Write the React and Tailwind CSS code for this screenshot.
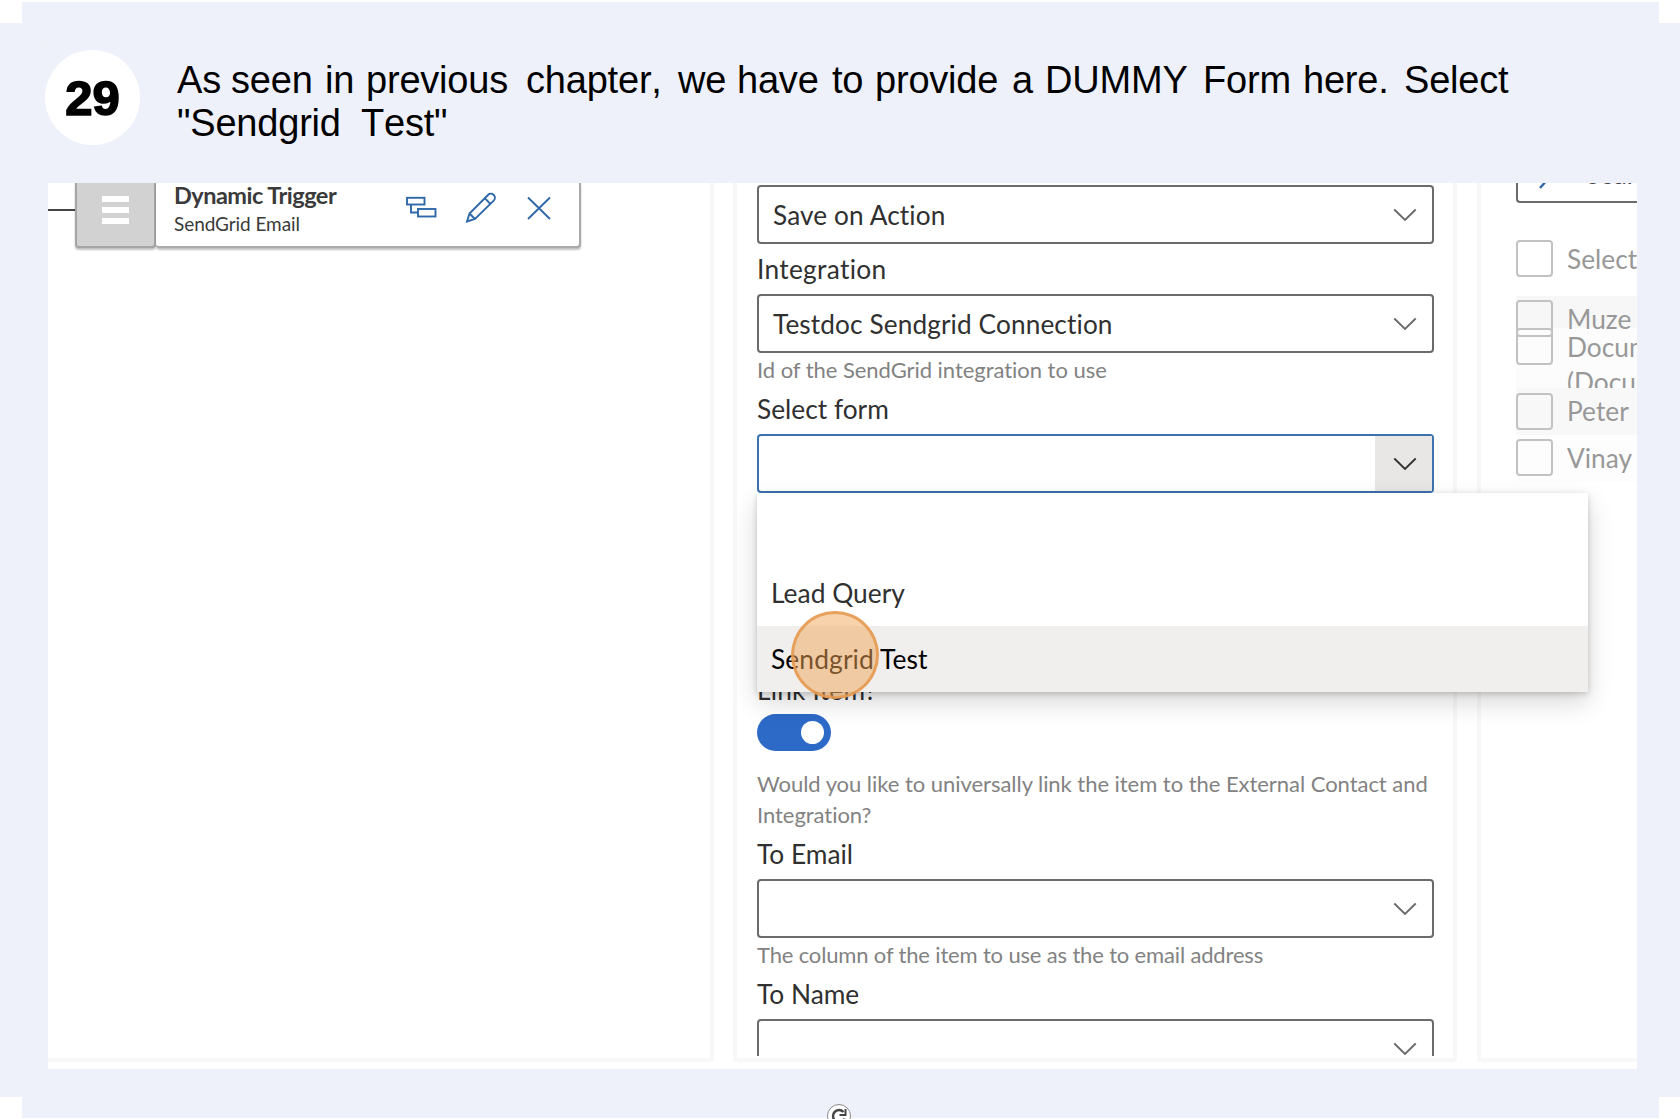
import React from "react";

const LATO = "font-[Lato,sans-serif] [font-variant-ligatures:none]";

const TITLE = [
  [
    ["As", "w-[54px]"],
    ["seen", "w-[94px]"],
    ["in", "w-[41px]"],
    ["previous", "w-[160px]"],
    ["chapter,", "w-[152px]"],
    ["we", "w-[59px]"],
    ["have", "w-[95px]"],
    ["to", "w-[43px]"],
    ["provide", "w-[137px]"],
    ["a", "w-[33px]"],
    ["DUMMY", "w-[158px]"],
    ["Form", "w-[100px]"],
    ["here.", "w-[101px]"],
    ["Select", "w-[120px]"],
  ],
  [
    ['"Sendgrid', "w-[184px]"],
    ['Test"', "w-[120px]"],
  ],
];

function Chevron({ color = "#6a6a6a" }) {
  return (
    <svg width="24" height="14" viewBox="0 0 24 14" fill="none">
      <path d="M1.3 1.5 L12 12 L22.7 1.5" stroke={color} strokeWidth="1.9" />
    </svg>
  );
}

function Field({ children }) {
  return (
    <div className="flex h-[59px] w-[677px] shrink-0 items-center justify-between rounded-[4px] border-2 border-[#6b6b6b] bg-white pl-[14px] pr-[15px]">
      <span className="text-[26.2px] leading-[50px] tracking-[0.12px] text-[#303030]">{children}</span>
      <Chevron />
    </div>
  );
}

function Label({ children, className = "" }) {
  return (
    <div className={"h-[50px] shrink-0 text-[26.3px] leading-[50px] text-[#303030] " + className}>{children}</div>
  );
}

function Hint({ children }) {
  return (
    <div className="mt-px -mb-px shrink-0 text-[22px] leading-[31px] tracking-[-0.04px] whitespace-nowrap text-[#828282]">
      {children}
    </div>
  );
}

function Check() {
  return <span className="h-[37px] w-[37px] shrink-0 rounded-[4px] border-2 border-[#c2c2c2]" />;
}

function Person({ className, children }) {
  return (
    <div className={"flex shrink-0 gap-[14px] text-[26.3px] whitespace-nowrap text-[#989898] " + className}>
      <Check />
      {children}
    </div>
  );
}

function Workflow() {
  return (
    <section className="h-[879px] w-[666px] shrink-0 border-r-4 border-b-4 border-[#f8f8f8]">
      <div className="flex h-[65px] items-start">
        <div className="mt-[26px] h-[2px] w-[27px] bg-[#444]" />
        <div className="flex h-[65px] w-[81px] flex-col items-center gap-[5px] rounded-b-[4px] border-x-2 border-b-2 border-[#a5a5a5] bg-[#d2d2d2] pt-[13px] shadow-[0_2px_2px_rgba(0,0,0,0.25)]">
          <span className="h-[6px] w-[27px] bg-white" />
          <span className="h-[6px] w-[27px] bg-white" />
          <span className="h-[6px] w-[27px] bg-white" />
        </div>
        <div className="flex h-[65px] w-[425px] rounded-b-[4px] border-r-2 border-b-2 border-[#aaa] bg-white pl-[18px] shadow-[0_2px_2px_rgba(0,0,0,0.25)]">
          <div className="w-[232px] shrink-0 text-[#3a3a3a]">
            <div className="h-[28px] text-[23.5px] leading-[24px] font-bold tracking-[-0.5px]">Dynamic Trigger</div>
            <div className="text-[19px] leading-[26px] tracking-[-0.07px]">SendGrid Email</div>
          </div>
          <svg width="150" height="40" viewBox="407 186 150 40" fill="none" stroke="#2f68a8" strokeWidth="1.9" className="mt-[2px]">
            <rect x="408" y="198.8" width="17.5" height="6.7" />
            <rect x="419" y="210" width="17.5" height="7.5" />
            <path d="M412 205.5 V213.5 H419" />
            <path d="M468 222.5 L470.5 214.5 L489 196 A4 4 0 0 1 494.7 201.7 L476 220 Z M470.5 214.5 L476 220 M485.7 199.2 L491.5 205" />
            <path d="M529 198.5 L551 220 M551 198.5 L529 220" />
          </svg>
        </div>
      </div>
    </section>
  );
}

function Dropdown() {
  return (
    <div className="absolute top-[59px] left-0 z-10 h-[199px] w-[831px] bg-white text-[26.4px] shadow-[0_10px_24px_rgba(0,0,0,0.16),0_2px_6px_rgba(0,0,0,0.18)]">
      <div className="h-[66px]" />
      <div className="h-[67px] pl-[14px] leading-[68px] text-[#303030]">Lead Query</div>
      <div className="h-[66px] bg-[#f0efed] pl-[14px] leading-[67px] tracking-[0.1px] text-black">Sendgrid Test</div>
      <div className="absolute top-[118px] left-[34px] h-[88px] w-[88px] rounded-full border-[3px] border-[#e4994f]/85 bg-[#efa557]/50" />
    </div>
  );
}

function Settings() {
  return (
    <section className="relative ml-[19px] h-[879px] w-[724px] shrink-0 border-x-4 border-b-4 border-[#f8f8f8] pl-[20px]">
      <div className="flex h-[873px] flex-col overflow-y-clip pt-[2px]">
        <Field>Save on Action</Field>
        <Label className="tracking-[0.3px]">Integration</Label>
        <Field>Testdoc Sendgrid Connection</Field>
        <Hint>Id of the SendGrid integration to use</Hint>
        <Label>Select form</Label>
        <div className="relative w-[677px] shrink-0">
          <div className="flex h-[59px] justify-end rounded-[4px] border-2 border-[#3c73ae] bg-white">
            <div className="flex w-[57px] items-center justify-center bg-[#e8e7e5] pl-[2px]">
              <Chevron color="#333" />
            </div>
          </div>
          <Dropdown />
        </div>
        <div className="mt-[172px] -mb-px shrink-0">
          <Label className="tracking-[0.2px]">Link Item?</Label>
        </div>
        <div className="flex h-[37px] w-[74px] shrink-0 items-center justify-end rounded-full bg-[#2d69c7] pr-[7px]">
          <span className="h-[23px] w-[23px] rounded-full bg-white" />
        </div>
        <div className="mt-[16px] shrink-0">
          <Hint>
            Would you like to universally link the item to the External Contact and
            <br />
            Integration?
          </Hint>
        </div>
        <Label>To Email</Label>
        <Field />
        <Hint>
          <span className="tracking-[-0.16px]">The column of the item to use as the to email address</span>
        </Hint>
        <Label>To Name</Label>
        <Field />
      </div>
    </section>
  );
}

function People() {
  return (
    <section className="ml-[20px] h-[879px] flex-1 overflow-hidden border-b-4 border-l-4 border-[#f8f8f8] pl-[35px]">
      <div className="flex h-[20px] w-[200px] items-end overflow-hidden rounded-bl-[4px] border-b-2 border-l-2 border-[#6b6b6b]">
        <svg width="12" height="18" viewBox="0 0 12 18" className="ml-[20px]">
          <path d="M2 5 L10 -4" stroke="#2f68a8" strokeWidth="2.4" />
        </svg>
        <span className="mb-[11px] ml-[36px] text-[26px] leading-[32px] text-[#444]">Search</span>
      </div>
      <Person className="mt-[37px] h-[56px] leading-[39px]">Select all</Person>
      <Person className="h-[32px] bg-[#f7f7f7] pt-[4px] leading-[38px]">Muze</Person>
      <Person className="h-[60px] overflow-hidden bg-[#f7f7f7]/40">
        <div className="mt-[2px] leading-[35px]">
          Document
          <br />
          (Document)
        </div>
      </Person>
      <Person className="h-[47px] bg-[#f8f8f8] pt-[5px] leading-[37px]">Peter</Person>
      <Person className="h-[47px] bg-[#fdfdfd] pt-[4px] leading-[38px]">Vinay</Person>
    </section>
  );
}

export default function App() {
  return (
    <div className="relative h-[1119px] w-[1680px] overflow-hidden bg-white">
      <div className="flex h-[1119px] flex-col py-[2px]">
        <div className="mx-auto h-[21px] w-[1637px] shrink-0 bg-[#eef1fa]" />
        <main className="flex h-[1074px] shrink-0 flex-col bg-[#eef1fa] pt-[20px]">
          <div className="ml-[38px] h-[1034px] w-[1603px] border-t-4 border-l-4 border-[#eef1f7]">
            <header className="flex h-[136px] pt-[3px] pl-[3px]">
              <div className="flex h-[95px] w-[95px] items-center justify-center rounded-full bg-white pt-[2px] font-['Liberation_Sans',sans-serif] text-[49px] leading-none font-bold text-black [-webkit-text-stroke:1.6px_black]">
                29
              </div>
              <h1 className="mt-[9px] ml-[37px] font-['Liberation_Sans',sans-serif] text-[38px] leading-[43px] font-normal tracking-[-0.2px] text-black [font-kerning:none]">
                {TITLE.map((line, i) => (
                  <span key={i} className="flex whitespace-nowrap">
                    {line.map(([word, width]) => (
                      <span key={word} className={"shrink-0 " + width}>
                        {word}
                      </span>
                    ))}
                  </span>
                ))}
              </h1>
            </header>
            <div className={"ml-[6px] flex h-[886px] w-[1589px] overflow-hidden bg-white " + LATO}>
              <Workflow />
              <Settings />
              <People />
            </div>
          </div>
        </main>
        <div className="mx-auto h-[21px] w-[1637px] shrink-0 bg-[#eef1fa]" />
      </div>
      <div className="absolute top-[1104px] left-[827px] flex h-[24px] w-[24px] items-center justify-center rounded-full border-[1.5px] border-[#8a8a8a] bg-white">
        <svg width="18" height="18" viewBox="0 0 18 18" fill="none" stroke="#444" strokeWidth="2.4">
          <path d="M14.5 11.5 A6 6 0 1 1 13.5 5" />
          <path d="M15.5 2 V8 H9.5" strokeWidth="2" />
        </svg>
      </div>
    </div>
  );
}
